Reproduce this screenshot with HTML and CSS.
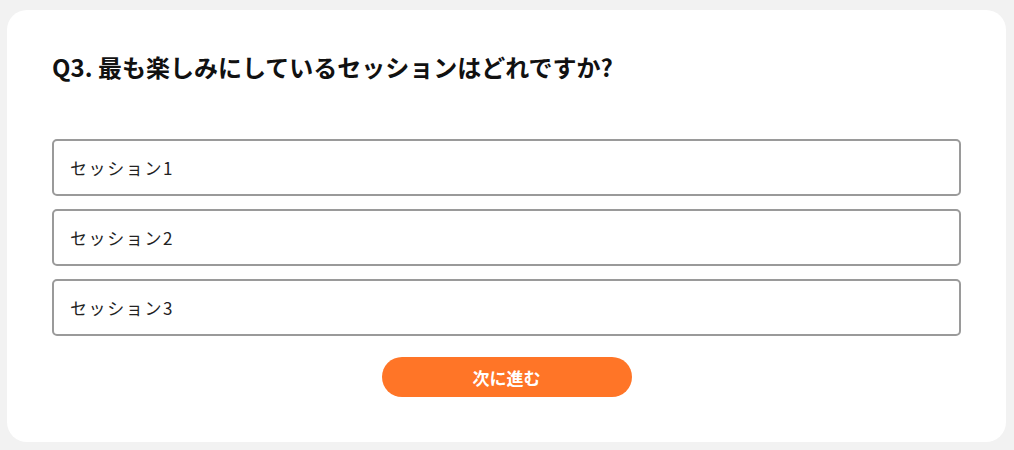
FILE: index.html
```html
<!DOCTYPE html>
<html lang="ja">
<head>
<meta charset="utf-8">
<link rel="stylesheet" href="styles.css">
</head>
<body>
<main class="card">
  <h1 class="question">Q3. 最も楽しみにしているセッションはどれですか?</h1>
  <ul class="options">
    <li class="option">セッション1</li>
    <li class="option">セッション2</li>
    <li class="option">セッション3</li>
  </ul>
  <div class="actions">
    <button class="next" type="button">次に進む</button>
  </div>
</main>
</body>
</html>
```
FILE: styles.css
```css
html, body {
  margin: 0;
  padding: 0;
}
body {
  background: #f2f2f2;
  padding: 10px 8px 8px 7px;
  font-family: "Noto Sans CJK JP", "Noto Sans", sans-serif;
  color: #111;
}
.card {
  background: #fff;
  border-radius: 20px;
  padding: 40px 45px 45px 45px;
  box-sizing: border-box;
  width: 999px;
  height: 432px;
}
.question {
  margin: 0;
  font-size: 24px;
  font-weight: 700;
  line-height: 34px;
  letter-spacing: 0;
}
.options {
  list-style: none;
  margin: 55px 0 0 0;
  padding: 0;
  display: flex;
  flex-direction: column;
  gap: 13px;
}
.option {
  height: 57px;
  box-sizing: border-box;
  border: 2px solid #9a9a9a;
  border-radius: 5px;
  display: flex;
  align-items: center;
  padding-left: 16px;
  font-size: 17px;
  letter-spacing: 1.6px;
  color: #222;
}
.actions {
  display: flex;
  justify-content: center;
  margin-top: 21px;
}
.next {
  width: 250px;
  height: 40px;
  border: none;
  border-radius: 20px;
  background: #ff7527;
  color: #fff;
  font-family: "Noto Sans CJK JP", sans-serif;
  font-size: 17px;
  font-weight: 700;
  cursor: pointer;
}
```
